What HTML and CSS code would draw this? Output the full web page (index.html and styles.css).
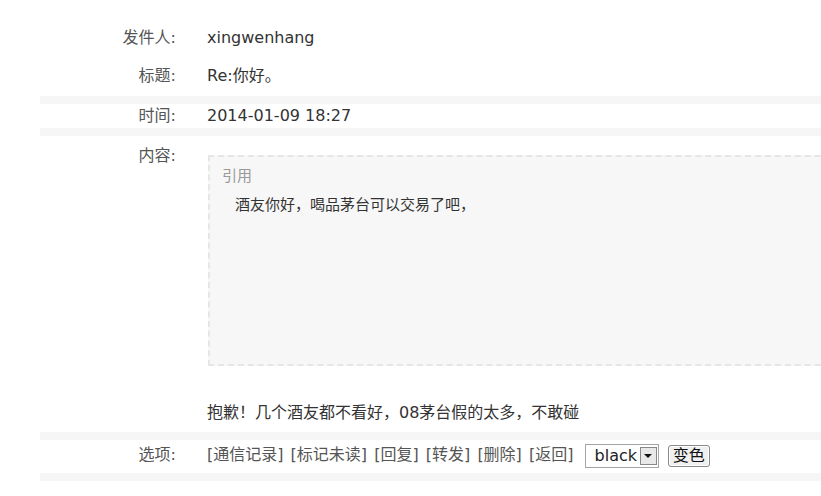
FILE: index.html
```html
<!DOCTYPE html>
<html lang="zh-CN">
<head>
    <meta charset="UTF-8">
    <title>查看短消息</title>
    <link rel="stylesheet" href="styles.css">
</head>
<body>
    <div class="msg">
        <div class="row first">
            <div class="label">发件人:</div>
            <div class="value">xingwenhang</div>
        </div>
        <div class="row second sep">
            <div class="label">标题:</div>
            <div class="value">Re:你好。</div>
        </div>
        <div class="row sep">
            <div class="label">时间:</div>
            <div class="value">2014-01-09 18:27</div>
        </div>
        <div class="row content sep">
            <div class="label">内容:</div>
            <div class="value">
                <div class="quote">
                    <div class="quote-title">引用</div>
                    <div class="quote-text">酒友你好，喝品茅台可以交易了吧，</div>
                </div>
                <p class="reply">抱歉！几个酒友都不看好，08茅台假的太多，不敢碰</p>
            </div>
        </div>
        <div class="row options sep">
            <div class="label">选项:</div>
            <div class="value">
                <a href="#">[通信记录]</a>
                <a href="#">[标记未读]</a>
                <a href="#">[回复]</a>
                <a href="#">[转发]</a>
                <a href="#">[删除]</a>
                <a href="#">[返回]</a>
                <span class="color-select"><span class="color-name">black</span><span class="arrow"></span></span>
                <button type="button" class="btn">变色</button>
            </div>
        </div>
    </div>
</body>
</html>
```

FILE: styles.css
```css
body {
    margin: 0;
    padding: 0 0 0 40px;
    background: #fff;
    font-family: "DejaVu Sans", "Noto Sans CJK SC", sans-serif;
    font-size: 16px;
    color: #333;
    overflow: hidden;
}
.msg {
    width: 900px;
}
.row {
    display: grid;
    grid-template-columns: 136px 1fr;
    column-gap: 31px;
    line-height: 24px;
}
.sep {
    border-bottom: 8px solid #f6f6f6;
}
.label {
    text-align: right;
    color: #555;
}
.first {
    padding: 26px 0 6px;
}
.second {
    padding: 8px 0;
}
.content {
    padding: 8px 0 7px;
}
.quote {
    margin: 11px 0 0 1px;
    height: 211px;
    background: #f7f7f7;
    border: 2px dashed #e6e6e6;
    border-right: none;
    padding: 7px 0 0 12px;
    box-sizing: border-box;
}
.quote-title {
    color: #999;
    font-size: 15px;
}
.quote-text {
    padding: 5px 0 0 13px;
    font-size: 15px;
}
.reply {
    margin: 35px 0 0;
}
.options {
    padding: 3px 0 5px;
}
.options a {
    color: #555;
    text-decoration: none;
    margin-right: 2px;
}
.color-select {
    display: inline-flex;
    align-items: center;
    vertical-align: middle;
    width: 74px;
    height: 24px;
    box-sizing: border-box;
    border: 1px solid #a5a5a5;
    background: #fff;
    margin-left: 4px;
    padding: 1px;
}
.color-name {
    flex: 1;
    padding-left: 8px;
    line-height: 20px;
    color: #222;
}
.arrow {
    width: 17px;
    height: 18px;
    box-sizing: border-box;
    border: 1px solid #888;
    background: #e8e8e8;
    display: flex;
    align-items: center;
    justify-content: center;
}
.arrow::after {
    content: "";
    border-left: 4px solid transparent;
    border-right: 4px solid transparent;
    border-top: 4px solid #111;
}
.btn {
    vertical-align: middle;
    height: 22px;
    width: 42px;
    margin-left: 4px;
    padding: 0;
    font-family: inherit;
    font-size: 16px;
    line-height: 18px;
    color: #111;
    background: #f0f0f0;
    border: 1px solid #8a8a8a;
    border-radius: 3px;
    box-shadow: inset 0 0 0 1px #fff;
}
```
